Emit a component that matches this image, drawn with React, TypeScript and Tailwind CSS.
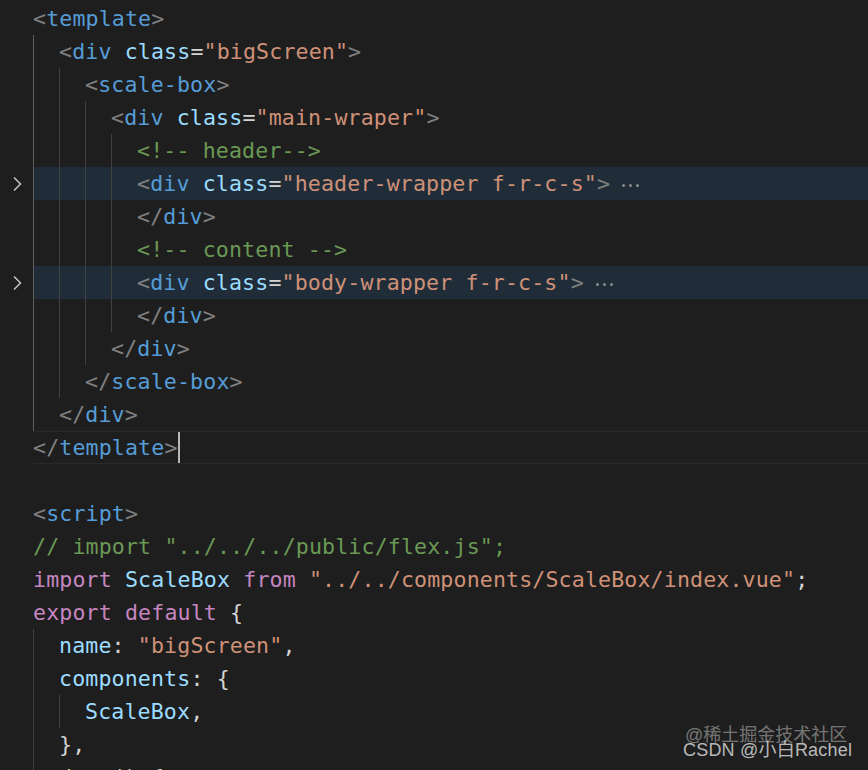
const colors = {
  p: "text-[#808080]", // tag punctuation
  t: "text-[#569cd6]", // tag name
  a: "text-[#9cdcfe]", // attribute / variable
  o: "text-[#d4d4d4]", // plain
  s: "text-[#ce9178]", // string
  c: "text-[#6a9955]", // comment
  k: "text-[#c586c0]", // keyword
  f: "text-[#dcdcaa]", // function
};

type Tok = [string, keyof typeof colors];

interface Line {
  indent: number;
  toks: Tok[];
  folded?: boolean;
  current?: boolean;
  bright?: boolean;
}

const openTag = (name: string, cls?: string): Tok[] =>
  cls
    ? [["<", "p"], [name, "t"], [" ", "o"], ["class", "a"], ["=", "o"], [`"${cls}"`, "s"], [">", "p"]]
    : [["<", "p"], [name, "t"], [">", "p"]];

const closeTag = (name: string): Tok[] => [["</", "p"], [name, "t"], [">", "p"]];

const lines: Line[] = [
  { indent: 0, toks: openTag("template") },
  { indent: 1, toks: openTag("div", "bigScreen"), bright: true },
  { indent: 2, toks: openTag("scale-box"), bright: true },
  { indent: 3, toks: openTag("div", "main-wraper"), bright: true },
  { indent: 4, toks: [["<!-- header-->", "c"]], bright: true },
  { indent: 4, toks: openTag("div", "header-wrapper f-r-c-s"), folded: true, bright: true },
  { indent: 4, toks: closeTag("div"), bright: true },
  { indent: 4, toks: [["<!-- content -->", "c"]], bright: true },
  { indent: 4, toks: openTag("div", "body-wrapper f-r-c-s"), folded: true, bright: true },
  { indent: 4, toks: closeTag("div"), bright: true },
  { indent: 3, toks: closeTag("div"), bright: true },
  { indent: 2, toks: closeTag("scale-box"), bright: true },
  { indent: 1, toks: closeTag("div"), bright: true },
  { indent: 0, toks: closeTag("template"), current: true },
  { indent: 0, toks: [] },
  { indent: 0, toks: openTag("script") },
  { indent: 0, toks: [['// import "../../../public/flex.js";', "c"]] },
  {
    indent: 0,
    toks: [
      ["import", "k"],
      [" ", "o"],
      ["ScaleBox", "a"],
      [" ", "o"],
      ["from", "k"],
      [" ", "o"],
      ['"../../components/ScaleBox/index.vue"', "s"],
      [";", "o"],
    ],
  },
  { indent: 0, toks: [["export", "k"], [" ", "o"], ["default", "k"], [" {", "o"]] },
  { indent: 1, toks: [["name", "a"], [": ", "o"], ['"bigScreen"', "s"], [",", "o"]] },
  { indent: 1, toks: [["components", "a"], [": {", "o"]] },
  { indent: 2, toks: [["ScaleBox", "a"], [",", "o"]] },
  { indent: 1, toks: [["},", "o"]] },
  { indent: 1, toks: [["data", "f"], ["() {", "o"]] },
];

const Chevron = () => (
  <svg width="12" height="16" viewBox="0 0 12 16" fill="none">
    <path d="M3 1.5 L9.5 8 L3 14.5" stroke="#c5c5c5" strokeWidth="1.5" />
  </svg>
);

const CodeLine = ({ line }: { line: Line }) => (
  <div className="flex h-[33px]">
    {/* gutter */}
    <div className="w-[33px] shrink-0 flex items-center justify-center">
      {line.folded && <Chevron />}
    </div>

    <div
      className={
        "flex-1 flex items-stretch " +
        (line.folded ? "bg-[#202d39] " : "") +
        (line.current ? "border-y border-[#2a2a2a]" : "")
      }
    >
      {/* indent guides */}
      {Array.from({ length: line.indent }).map((_, i) => (
        <span
          key={i}
          className={
            "w-[26px] shrink-0 border-l " +
            (i === 0 && line.bright ? "border-[#5f5f5f]" : "border-[#404040]")
          }
        />
      ))}

      <div className="flex items-center whitespace-pre">
        {line.toks.map(([text, c], i) => (
          <span key={i} className={colors[c]}>
            {text}
          </span>
        ))}
        {line.folded && (
          <span className="ml-[12px] flex items-center gap-[4px] pt-[3px]">
            <span className="w-[3px] h-[3px] rounded-full bg-[#8a8a8a]" />
            <span className="w-[3px] h-[3px] rounded-full bg-[#8a8a8a]" />
            <span className="w-[3px] h-[3px] rounded-full bg-[#8a8a8a]" />
          </span>
        )}
        {line.current && <span className="w-[2px] h-[31px] bg-[#b8b8b8]" />}
      </div>
    </div>
  </div>
);

export default function App() {
  return (
    <div className="relative w-[868px] h-[770px] overflow-hidden bg-[#1e1e1e]">
      <div className="pt-[2px] font-['DejaVu_Sans_Mono',monospace] text-[21.6px] leading-[33px] tracking-[0.14px]">
        {lines.map((l, i) => (
          <CodeLine key={i} line={l} />
        ))}
      </div>

      {/* watermark */}
      <div className="absolute left-[685px] top-[724px] font-['Liberation_Sans','Noto_Sans_CJK_SC',sans-serif] text-[18px] leading-[22px] text-white/40 whitespace-nowrap">
        @稀土掘金技术社区
      </div>
      <div className="absolute left-[683px] top-[739px] font-['Liberation_Sans','Noto_Sans_CJK_SC',sans-serif] text-[18px] leading-[22px] text-white/70 whitespace-nowrap tracking-[0.2px]">
        CSDN @小白Rachel
      </div>
    </div>
  );
}
